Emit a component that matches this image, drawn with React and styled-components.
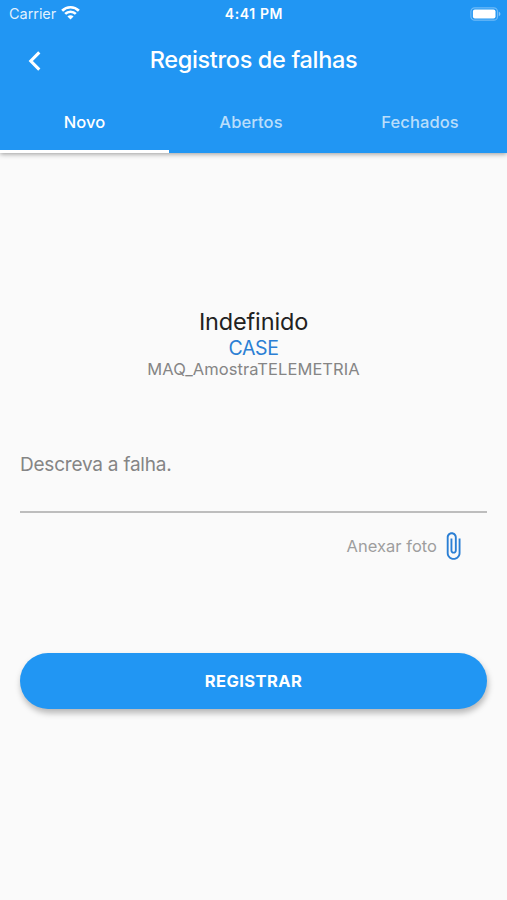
import React, { useState } from 'react';
import styled, { createGlobalStyle } from 'styled-components';

const tabs = ['Novo', 'Abertos', 'Fechados'];

const WifiIcon = () => (
    <svg width="19" height="15" viewBox="0 0 20 15" fill="none" stroke="#fff" strokeWidth="2.8">
        <path d="M1.2 5.6a12.5 12.5 0 0 1 17.6 0" />
        <path d="M4.4 9a7.9 7.9 0 0 1 11.2 0" />
        <path d="M10 14.8l-3.2-3.2a4.5 4.5 0 0 1 6.4 0z" fill="#fff" stroke="none" />
    </svg>
)

const BatteryIcon = () => (
    <svg width="31" height="14" viewBox="0 0 31 14">
        <rect x="0.9" y="0.8" width="26.6" height="12.4" rx="3.8" fill="none" stroke="#fff" strokeOpacity="0.35" strokeWidth="1.2" />
        <rect x="2.9" y="2.5" width="22.6" height="9" rx="2" fill="#fff" />
        <path d="M28.8 4.8c1.1.4 1.6 1.2 1.6 2.2s-.5 1.8-1.6 2.2z" fill="#fff" fillOpacity="0.45" />
    </svg>
)

const BackIcon = () => (
    <svg width="13" height="20" viewBox="0 0 13 20" fill="none" stroke="#fff" strokeWidth="3.1">
        <path d="M11.3 1.4L2.8 10l8.5 8.6" />
    </svg>
)

const ClipIcon = () => (
    <svg width="30" height="30" viewBox="0 0 24 24" fill="#2b7fd4">
        <path d="M16.5 6v11.5c0 2.21-1.79 4-4 4s-4-1.79-4-4V5c0-1.38 1.12-2.5 2.5-2.5s2.5 1.12 2.5 2.5v10.5c0 .55-.45 1-1 1s-1-.45-1-1V6H10v9.5c0 1.38 1.12 2.5 2.5 2.5s2.5-1.12 2.5-2.5V5c0-2.21-1.79-4-4-4S7 2.79 7 5v12.5c0 3.04 2.46 5.5 5.5 5.5s5.5-2.46 5.5-5.5V6h-1.5z" />
    </svg>
)

const App = () => {
    const [activeTab, setActiveTab] = useState('Novo')
    return (
        <Screen>
            <GlobalStyle />
            <Header>
                <StatusBar>
                    <Carrier>
                        <span>Carrier</span>
                        <WifiIcon />
                    </Carrier>
                    <Clock>4:41 PM</Clock>
                    <Battery><BatteryIcon /></Battery>
                </StatusBar>
                <TitleBar>
                    <BackButton aria-label="Voltar"><BackIcon /></BackButton>
                    <Title>Registros de falhas</Title>
                </TitleBar>
                <TabRow>
                    {tabs.map((tab) => (
                        <Tab key={tab} $active={tab === activeTab} onClick={() => setActiveTab(tab)}>
                            {tab}
                        </Tab>
                    ))}
                </TabRow>
            </Header>
            <Content>
                <Machine>
                    <Status>Indefinido</Status>
                    <Brand>CASE</Brand>
                    <Model>MAQ_AmostraTELEMETRIA</Model>
                </Machine>
                <Description placeholder="Descreva a falha." />
                <Attach>
                    <span>Anexar foto</span>
                    <ClipIcon />
                </Attach>
                <Submit>REGISTRAR</Submit>
            </Content>
        </Screen>
    )
}
export default App;


const GlobalStyle = createGlobalStyle`
*{
box-sizing:border-box;
}
body{
margin:0;
background:#fafafa;
}
body, button, input{
font-family:Inter, "Liberation Sans", sans-serif;
}
`

const Screen = styled.div`
display:flex;
flex-direction:column;
height:900px;
max-width:507px;
background:#fafafa;
overflow:hidden;
`

const Header = styled.header`
background:#2196f3;
color:white;
height:153px;
box-shadow:0 1px 5px rgba(0,0,0,0.4);
`

const StatusBar = styled.div`
display:grid;
grid-template-columns:1fr auto 1fr;
align-items:center;
height:27px;
padding:0 6px 0 9px;
`

const Carrier = styled.div`
display:flex;
align-items:center;
gap:5px;
font-size:14.5px;
letter-spacing:-0.05px;
color:rgba(255,255,255,0.88);
svg{
margin-top:-2px;
}
`

const Clock = styled.div`
margin-left:-2px;
font-size:14px;
font-weight:600;
letter-spacing:0.6px;
`

const Battery = styled.div`
display:flex;
justify-content:flex-end;
`

const TitleBar = styled.div`
display:grid;
grid-template-columns:70px 1fr 70px;
align-items:center;
height:66px;
`

const BackButton = styled.button`
display:flex;
align-items:center;
height:48px;
padding:2px 0 0 28px;
border:none;
background:none;
`

const Title = styled.h1`
margin:0;
padding-bottom:2px;
text-align:center;
font-size:23.5px;
font-weight:500;
letter-spacing:-0.35px;
`

const TabRow = styled.div`
display:grid;
grid-template-columns:repeat(3, 1fr);
height:60px;
`

const Tab = styled.button`
padding:0;
border:none;
border-bottom:3px solid ${(props) => (props.$active ? '#fff' : 'transparent')};
background:none;
color:${(props) => (props.$active ? '#fff' : 'rgba(255,255,255,0.7)')};
font-size:16.5px;
font-weight:500;
letter-spacing:0.1px;
&:not(:first-child){
padding-right:5px;
}
`

const Content = styled.main`
display:flex;
flex-direction:column;
padding:154px 20px 0;
`

const Machine = styled.section`
display:flex;
flex-direction:column;
align-items:center;
`

const Status = styled.div`
font-size:23.5px;
line-height:30px;
letter-spacing:-0.15px;
color:#212121;
`

const Brand = styled.div`
font-size:19.5px;
line-height:23px;
letter-spacing:-0.4px;
color:#2b7fd4;
`

const Model = styled.div`
font-size:16.5px;
line-height:19px;
letter-spacing:0.06px;
color:#858585;
`

const Description = styled.input`
height:95px;
margin-top:39px;
padding:0;
border:none;
border-bottom:2px solid #bdbdbd;
background:none;
outline:none;
font-size:19px;
letter-spacing:-0.22px;
&::placeholder{
color:#858585;
opacity:1;
}
`

const Attach = styled.div`
display:flex;
align-items:center;
justify-content:flex-end;
gap:1px;
margin-top:18px;
padding-right:19px;
height:30px;
font-size:16.5px;
letter-spacing:0.03px;
color:#9e9e9e;
`

const Submit = styled.button`
height:56px;
margin-top:92px;
border:none;
border-radius:28px;
background:#2196f3;
color:white;
font-size:16.5px;
font-weight:700;
letter-spacing:0.4px;
box-shadow:1px 4px 6px rgba(0,0,0,0.28);
`
